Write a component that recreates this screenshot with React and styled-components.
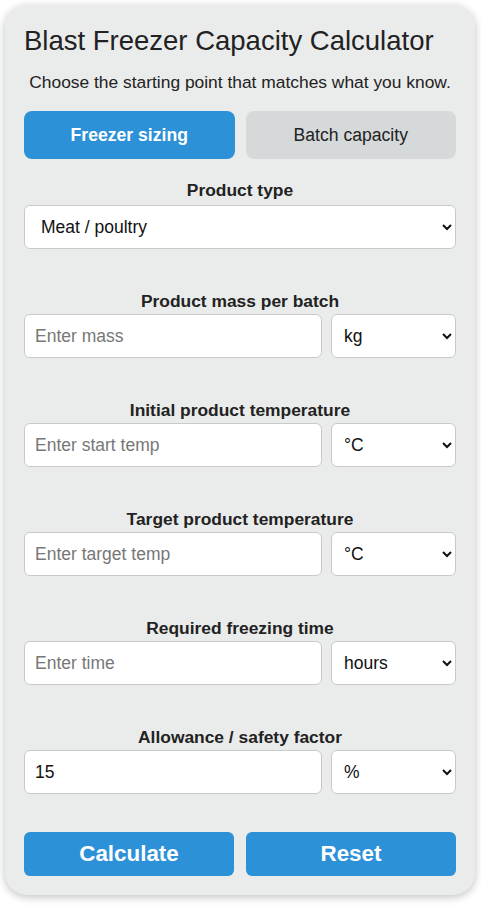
import React, { useState } from 'react'
import styled, { createGlobalStyle } from 'styled-components'

const Global = createGlobalStyle`
  body {
    margin: 0;
    background: #ffffff;
    font-family: "Liberation Sans", Arial, sans-serif;
  }
  * { box-sizing: border-box; }
`

const Page = styled.div`
  padding: 5px 6px 15px 5px;
`

const Card = styled.div`
  background: #eaeceb;
  border-radius: 22px;
  box-shadow: 0 2px 8px rgba(0, 0, 0, 0.25);
  padding: 20px 19px 19px 19px;
  color: #222;
`

const Title = styled.h1`
  margin: 0;
  font-size: 27.5px;
  font-weight: normal;
  line-height: 32px;
  color: #222;
`

const Subtitle = styled.p`
  margin: 15px 0 19px;
  text-align: center;
  font-size: 17.4px;
  line-height: 20px;
  color: #222;
`

const TabRow = styled.div`
  display: grid;
  grid-template-columns: 1fr 1fr;
  gap: 11px;
  margin-bottom: 21px;
`

const Tab = styled.button`
  height: 48px;
  border: none;
  border-radius: 8px;
  font-family: inherit;
  font-size: 17.6px;
  font-weight: ${(p) => (p.active ? 'bold' : 'normal')};
  background: ${(p) => (p.active ? '#2d91d8' : '#d6d9da')};
  color: ${(p) => (p.active ? '#ffffff' : '#222')};
  cursor: pointer;
`

const Field = styled.div`
  margin-bottom: ${(p) => (p.last ? '38px' : '42px')};
`

const Label = styled.label`
  display: block;
  text-align: center;
  font-size: 17.4px;
  font-weight: bold;
  line-height: 20px;
  margin-bottom: ${(p) => (p.loose ? '5px' : '3px')};
  color: #222;
`

const Row = styled.div`
  display: grid;
  grid-template-columns: 1fr 125px;
  gap: 9px;
`

const Input = styled.input`
  width: 100%;
  height: 44px;
  border: 1px solid #c9c9c9;
  border-radius: 6px;
  background: #fff;
  padding: 0 10px;
  font-family: inherit;
  font-size: 17.5px;
  color: #111;
  &::placeholder { color: #777; }
  outline: none;
`

const Select = styled.select`
  width: 100%;
  height: 44px;
  border: 1px solid #c9c9c9;
  border-radius: 6px;
  background: #fff;
  padding: 0 ${(p) => (p.wide ? '12px' : '8px')};
  font-family: inherit;
  font-size: 17.5px;
  color: #111;
  outline: none;
`

const Actions = styled.div`
  display: grid;
  grid-template-columns: 1fr 1fr;
  gap: 12px;
`

const Action = styled.button`
  height: 44px;
  border: none;
  border-radius: 6px;
  background: #2d91d8;
  color: #fff;
  font-family: inherit;
  font-size: 22.4px;
  font-weight: bold;
  cursor: pointer;
`

const fields = [
  { label: 'Product mass per batch', placeholder: 'Enter mass', units: ['kg', 'lb', 't'] },
  { label: 'Initial product temperature', placeholder: 'Enter start temp', units: ['°C', '°F'] },
  { label: 'Target product temperature', placeholder: 'Enter target temp', units: ['°C', '°F'] },
  { label: 'Required freezing time', placeholder: 'Enter time', units: ['hours', 'minutes'] },
  { label: 'Allowance / safety factor', placeholder: '', units: ['%'], value: '15' },
]

export default function App() {
  const [mode, setMode] = useState('sizing')
  return (
    <Page>
      <Global />
      <Card>
        <Title>Blast Freezer Capacity Calculator</Title>
        <Subtitle>Choose the starting point that matches what you know.</Subtitle>
        <TabRow>
          <Tab active={mode === 'sizing'} onClick={() => setMode('sizing')}>Freezer sizing</Tab>
          <Tab active={mode === 'batch'} onClick={() => setMode('batch')}>Batch capacity</Tab>
        </TabRow>
        <Field>
          <Label loose>Product type</Label>
          <Select wide defaultValue="meat">
            <option value="meat">Meat / poultry</option>
            <option value="fish">Fish / seafood</option>
            <option value="veg">Vegetables</option>
          </Select>
        </Field>
        {fields.map((f, i) => (
          <Field key={f.label} last={i === fields.length - 1}>
            <Label>{f.label}</Label>
            <Row>
              <Input placeholder={f.placeholder} defaultValue={f.value} />
              <Select defaultValue={f.units[0]}>
                {f.units.map((u) => <option key={u}>{u}</option>)}
              </Select>
            </Row>
          </Field>
        ))}
        <Actions>
          <Action>Calculate</Action>
          <Action>Reset</Action>
        </Actions>
      </Card>
    </Page>
  )
}
